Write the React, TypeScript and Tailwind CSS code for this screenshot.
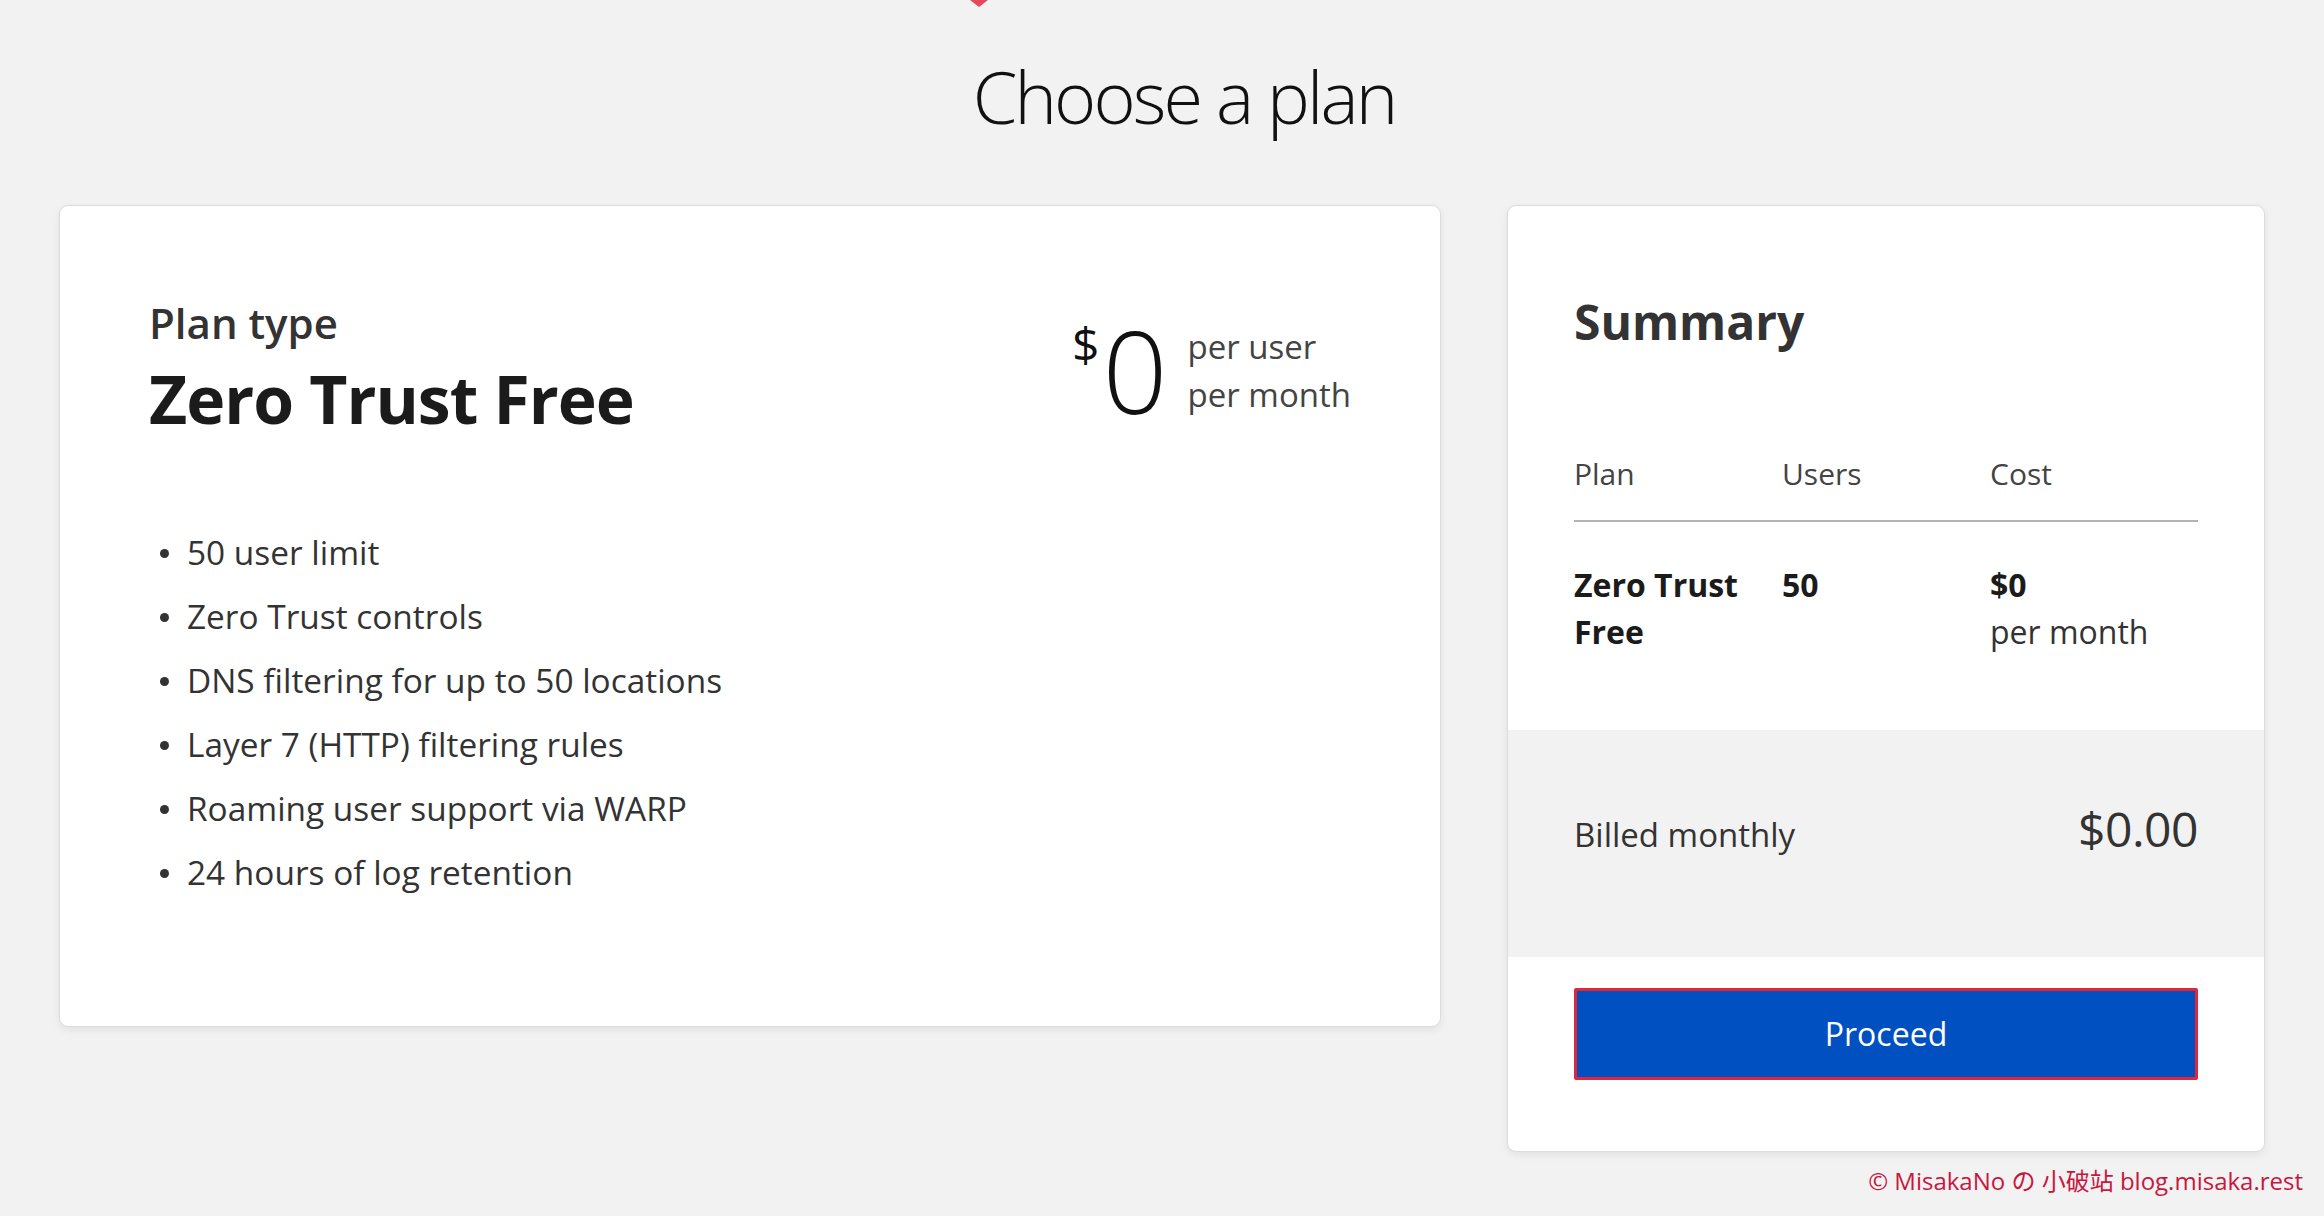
import React from 'react';

const features = [
  '50 user limit',
  'Zero Trust controls',
  'DNS filtering for up to 50 locations',
  'Layer 7 (HTTP) filtering rules',
  'Roaming user support via WARP',
  '24 hours of log retention',
];

function PlanCard() {
  return (
    <div className="w-[1382px] h-[822px] shrink-0 bg-white rounded-[9px] border border-[#dcdcdc] shadow-[0_3px_8px_rgba(0,0,0,0.07)] px-[89px] pt-[92px]">
      <div className="flex items-start justify-between">
        <div>
          <div className="text-[42px] leading-[1.2] font-semibold text-[#333]">Plan type</div>
          <div className="mt-[11px] text-[66px] leading-[1.2] font-bold tracking-[-0.015em] text-[#1b1b1b]">Zero Trust Free</div>
        </div>
        {/* price */}
        <div className="flex items-start text-[#111]">
          <span className="mt-[22px] text-[48px] leading-none">$</span>
          <span className="mt-[15px] ml-[3px] text-[114px] leading-none font-light">0</span>
          <div className="mt-[25px] ml-[20px] text-[33px] leading-[48px] text-[#444]">
            <div>per user</div>
            <div>per month</div>
          </div>
        </div>
      </div>

      <ul className="mt-[81px]">
        {features.map(f => (
          <li key={f} className="flex items-center h-[64px] text-[33.4px] text-[#333]">
            <span className="w-[9px] h-[9px] rounded-full bg-[#333] ml-[11px] mr-[18px] mt-[4px]" />
            {f}
          </li>
        ))}
      </ul>
    </div>
  );
}

function SummaryCard() {
  return (
    <div className="w-[758px] shrink-0 bg-white rounded-[9px] border border-[#dcdcdc] shadow-[0_3px_8px_rgba(0,0,0,0.07)] overflow-hidden">
      <div className="px-[66px] pt-[86px]">
        <div className="text-[48px] leading-[1.25] font-bold text-[#333]">Summary</div>

        <div className="mt-[99px] grid grid-cols-3 pb-[22px] border-b-2 border-[#b3b3b3] text-[30px] leading-[1.55] text-[#444]">
          <div>Plan</div>
          <div>Users</div>
          <div>Cost</div>
        </div>

        <div className="grid grid-cols-3 pt-[39px] pb-[75px] text-[32px] leading-[47px] text-[#1b1b1b]">
          <div className="font-bold pr-[20px]">Zero Trust Free</div>
          <div className="font-bold">50</div>
          <div>
            <div className="font-bold">$0</div>
            <div className="text-[#333]">per month</div>
          </div>
        </div>
      </div>

      <div className="h-[227px] bg-[#f2f2f2] px-[66px] pt-[75px] flex items-baseline justify-between text-[#333]">
        <span className="text-[33px]">Billed monthly</span>
        <span className="text-[48px] leading-none tracking-[-0.01em]">$0.00</span>
      </div>

      <div className="px-[66px] pt-[31px] pb-[71px]">
        <button className="w-full h-[92px] bg-[#0050c2] border-[3px] border-[#e1263b] text-white text-[32px] rounded-[2px]">
          Proceed
        </button>
      </div>
    </div>
  );
}

export default function App() {
  return (
    <div className="relative h-[1216px] overflow-hidden bg-[#f2f2f2] font-['Open_Sans','Noto_Sans_CJK_JP',sans-serif]">
      {/* cut-off logo at the top edge */}
      <svg className="absolute left-[968px] top-0" width="22" height="8" viewBox="0 0 22 8">
        <path d="M2 0 L20 0 L11 7 Z" fill="#e8475a" />
      </svg>

      <h1 className="pt-[60px] pl-[44px] text-center text-[72px] leading-none font-light tracking-[-0.04em] text-[#111]">Choose a plan</h1>

      <div className="mt-[73px] flex items-start gap-[66px] px-[59px]">
        <PlanCard />
        <SummaryCard />
      </div>

      <div className="absolute right-[21px] bottom-[23px] text-[24px] leading-none text-[#c8173f]">
        © MisakaNo の 小破站 blog.misaka.rest
      </div>
    </div>
  );
}
